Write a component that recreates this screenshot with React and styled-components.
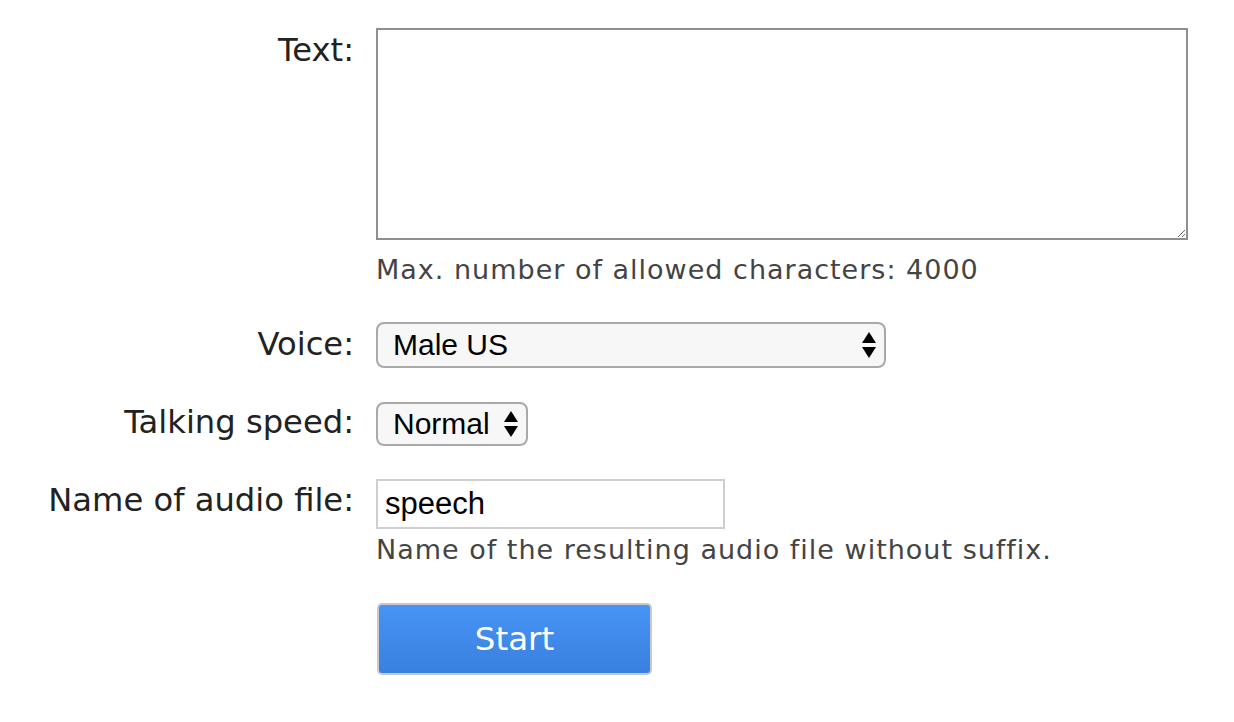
import React from "react";
import styled, { createGlobalStyle } from "styled-components";

const GlobalStyle = createGlobalStyle`
  html, body {
    margin: 0;
    padding: 0;
    background: #fff;
  }
  body {
    font-family: "DejaVu Sans", Verdana, sans-serif;
    color: #222;
  }
`;

const Form = styled.form`
  display: grid;
  grid-template-columns: 354px 812px;
  column-gap: 22px;
  padding-top: 28px;
`;

const Label = styled.label`
  text-align: right;
  font-size: 32.2px;
  line-height: 40px;
  color: #222;
  padding-top: ${(p) => p.$top || 0}px;
`;

const Field = styled.div`
  display: flex;
  flex-direction: column;
  align-items: flex-start;
  margin-bottom: ${(p) => p.$mb || 0}px;
`;

const TextArea = styled.textarea`
  box-sizing: border-box;
  width: 812px;
  height: 212px;
  margin: 0;
  border: 2px solid #8f8f8f;
  border-radius: 0;
  padding: 6px;
  font-size: 26px;
  font-family: "Liberation Sans", Arial, sans-serif;
  resize: both;
  outline: none;
`;

const Help = styled.div`
  font-size: 27px;
  line-height: 32px;
  letter-spacing: 1px;
  color: #444;
  margin-top: ${(p) => p.$mt || 0}px;
`;

const SelectWrap = styled.div`
  position: relative;
  width: ${(p) => p.$w}px;
`;

const Select = styled.select`
  appearance: none;
  -webkit-appearance: none;
  box-sizing: border-box;
  width: 100%;
  height: ${(p) => p.$h}px;
  margin: 0;
  border: 2px solid #a9a9a9;
  border-radius: 8px;
  background: #f7f7f7;
  color: #000;
  font-family: "Liberation Sans", Helvetica, Arial, sans-serif;
  font-size: 30px;
  padding: 0 30px 0 15px;
  outline: none;
`;

const Arrows = styled.svg`
  position: absolute;
  right: 9px;
  top: 50%;
  transform: translateY(-50%);
  pointer-events: none;
`;

const TextInput = styled.input`
  box-sizing: border-box;
  width: 349px;
  height: 50px;
  margin: 0;
  border: 2px solid #cfcfcf;
  padding: 0 7px;
  font-family: "Liberation Sans", Helvetica, Arial, sans-serif;
  font-size: 31px;
  color: #000;
  outline: none;
`;

const StartButton = styled.button`
  box-sizing: border-box;
  width: 275px;
  height: 72px;
  margin: 0 0 0 1px;
  border: 2px solid #c9c9c9;
  border-radius: 5px;
  background: linear-gradient(#4694f5, #3a80df);
  color: #fff;
  font-family: "DejaVu Sans", Verdana, sans-serif;
  font-size: 32.5px;
  cursor: pointer;
`;

const UpDown = () => (
  <Arrows width="16" height="28" viewBox="0 0 16 28">
    <path d="M8 1 L15 12 L1 12 Z" fill="#000" />
    <path d="M1 16 L15 16 L8 27 Z" fill="#000" />
  </Arrows>
);

export default function App() {
  return (
    <>
      <GlobalStyle />
      <Form onSubmit={(e) => e.preventDefault()}>
        <Label $top={2.4}>Text:</Label>
        <Field $mb={36.4}>
          <TextArea />
          <Help $mt={13.6}>Max. number of allowed characters: 4000</Help>
        </Field>

        <Label $top={2.4}>Voice:</Label>
        <Field $mb={34}>
          <SelectWrap $w={510}>
            <Select $h={46} defaultValue="male-us">
              <option value="male-us">Male US</option>
              <option value="female-us">Female US</option>
              <option value="male-uk">Male UK</option>
              <option value="female-uk">Female UK</option>
            </Select>
            <UpDown />
          </SelectWrap>
        </Field>

        <Label $top={0.4}>Talking speed:</Label>
        <Field $mb={33}>
          <SelectWrap $w={152}>
            <Select $h={44} defaultValue="normal">
              <option value="slow">Slow</option>
              <option value="normal">Normal</option>
              <option value="fast">Fast</option>
            </Select>
            <UpDown />
          </SelectWrap>
        </Field>

        <Label $top={1.4}>Name of audio file:</Label>
        <Field $mb={37.4}>
          <TextInput defaultValue="speech" />
          <Help $mt={4.6}>Name of the resulting audio file without suffix.</Help>
        </Field>

        <div />
        <Field>
          <StartButton type="submit">Start</StartButton>
        </Field>
      </Form>
    </>
  );
}
